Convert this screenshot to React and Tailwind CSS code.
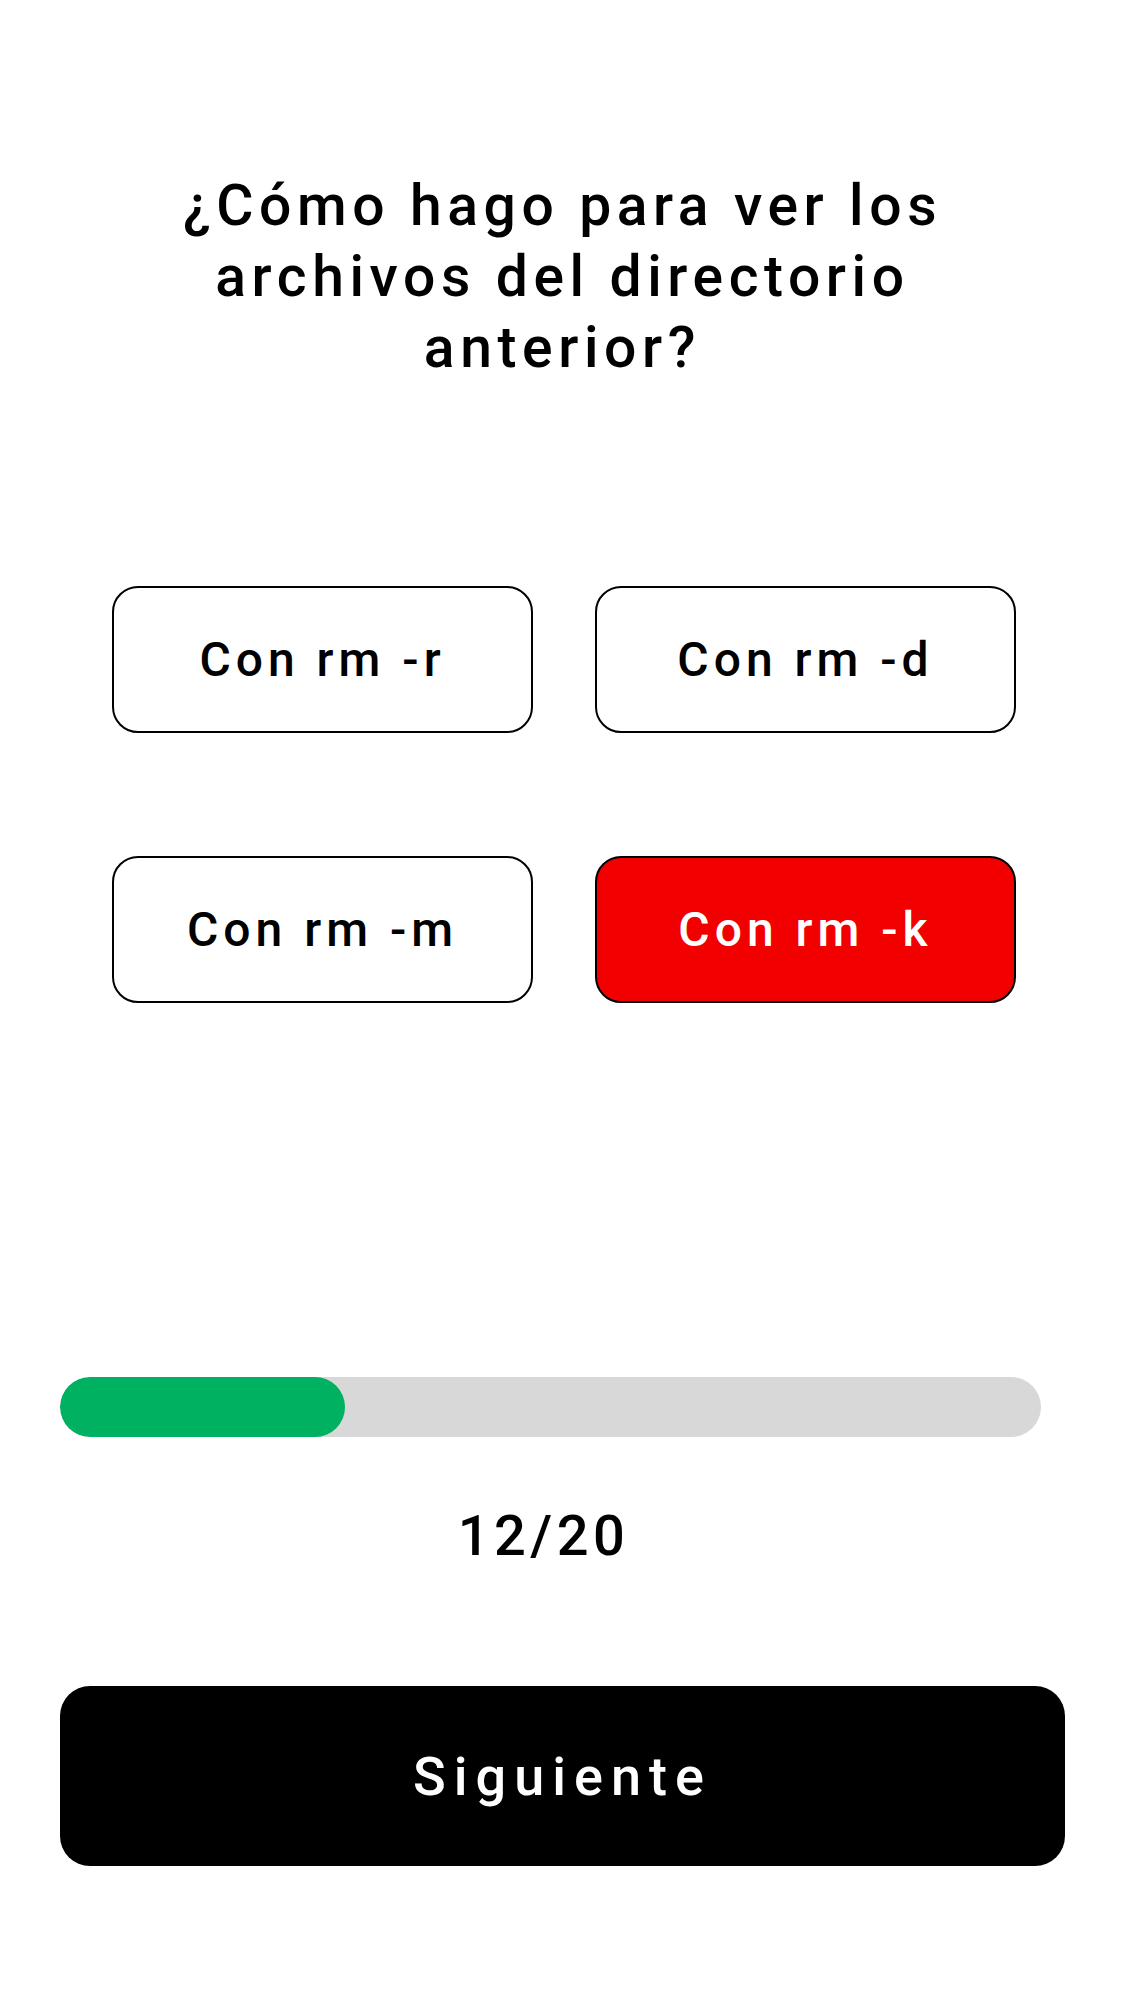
import React from "react";

const options = [
  { label: "Con rm -r", selected: false },
  { label: "Con rm -d", selected: false },
  { label: "Con rm -m", selected: false },
  { label: "Con rm -k", selected: true },
];

export default function App() {
  const progress = 285 / 981;
  return (
    <div className="w-[1125px] h-[2001px] bg-white font-['Roboto',sans-serif] flex flex-col">
      <h1 className="mt-[170px] text-center text-[57px] leading-[71px] font-medium tracking-[5.6px] text-black">
        ¿Cómo hago para ver los
        <br />
        archivos del directorio
        <br />
        anterior?
      </h1>

      <div className="mt-[203px] ml-[112px] grid grid-cols-[421px_421px] gap-x-[62px] gap-y-[123px]">
        {options.map((o) => (
          <button
            key={o.label}
            className={
              o.selected
                ? "h-[147px] rounded-[26px] border-[2.5px] border-black bg-[#f20000] text-white flex items-center justify-center text-[48px] font-medium tracking-[5px]"
                : "h-[147px] rounded-[26px] border-[2.5px] border-black bg-white text-black flex items-center justify-center text-[48px] font-medium tracking-[5px]"
            }
          >
            {o.label}
          </button>
        ))}
      </div>

      <div className="mt-[374px] ml-[60px] w-[981px] h-[60px] rounded-full bg-[#d8d8d8] overflow-hidden">
        <div
          className="h-full rounded-full bg-[#00b161]"
          style={{ width: `${progress * 100}%` }}
        />
      </div>

      <div className="mt-[71px] ml-[60px] w-[981px] flex justify-center pr-[14px]">
        <span className="text-[56px] leading-[56px] font-medium tracking-[4.5px] text-black">
          12/20
        </span>
      </div>

      <button className="mt-[122px] ml-[60px] w-[1005px] h-[180px] rounded-[30px] bg-black text-white flex items-center justify-center text-[54px] font-medium tracking-[8px]">
        Siguiente
      </button>
    </div>
  );
}
